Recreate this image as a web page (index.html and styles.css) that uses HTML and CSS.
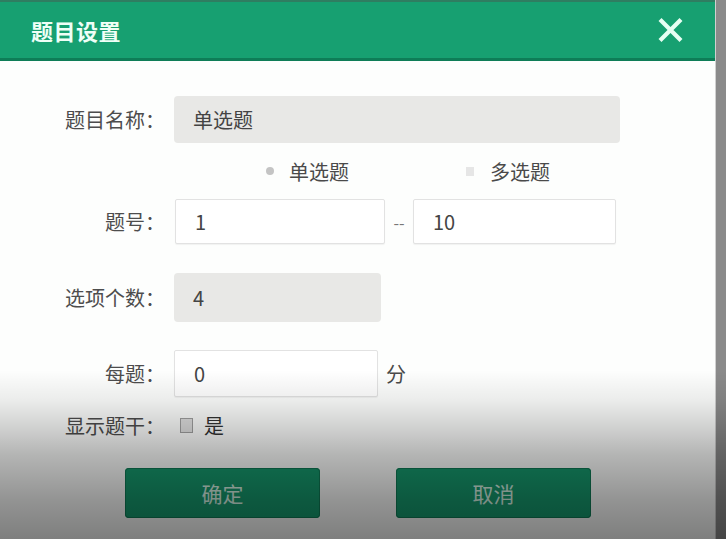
FILE: index.html
```html
<!DOCTYPE html>
<html lang="zh-CN">
<head>
<meta charset="utf-8">
<title>题目设置</title>
<link rel="stylesheet" href="styles.css">
</head>
<body>
<div class="dialog">
  <div class="header">
    <span class="title">题目设置</span>
    <svg class="close" width="25" height="24" viewBox="0 0 25 24"><path d="M3.5 3 L21.5 21 M21.5 3 L3.5 21" stroke="#e6fff3" stroke-width="4.2" stroke-linecap="square" fill="none"/></svg>
  </div>
  <div class="form">
    <div class="row row-name">
      <label class="label">题目名称：</label>
      <div class="input gray wide">单选题</div>
    </div>
    <div class="row row-radio">
      <span class="opt"><span class="dot"></span>单选题</span>
      <span class="opt"><span class="sq"></span>多选题</span>
    </div>
    <div class="row row-num">
      <label class="label">题号：</label>
      <div class="input white w210">1</div>
      <span class="dash">--</span>
      <div class="input white w203">10</div>
    </div>
    <div class="row row-count">
      <label class="label">选项个数：</label>
      <div class="input gray w207">4</div>
    </div>
    <div class="row row-score">
      <label class="label">每题：</label>
      <div class="input white w204">0</div>
      <span class="unit">分</span>
    </div>
    <div class="row row-show">
      <label class="label">显示题干：</label>
      <span class="check"></span>
      <span class="yes">是</span>
    </div>
    <div class="buttons">
      <button class="btn">确定</button>
      <button class="btn">取消</button>
    </div>
  </div>
</div>
<div class="shade"></div>
</body>
</html>
```
FILE: styles.css
```css
html, body {
  margin: 0;
  padding: 0;
  width: 726px;
  height: 539px;
  overflow: hidden;
}
body {
  background: linear-gradient(to right, #c4c4c4 0, #b0b0b0 5px, #8a8a8a 11px);
  font-family: "Noto Sans CJK SC", "Noto Sans", sans-serif;
  color: #4a4a4a;
  position: relative;
}
.dialog {
  width: 715px;
  height: 539px;
  background: #fdfefd;
  box-shadow: 1px 0 0 #d0d0d0;
}
.header {
  height: 56px;
  background: #17a071;
  border-top: 2px solid #2f7d61;
  border-bottom: 3px solid #0e7d57;
  display: flex;
  align-items: center;
  justify-content: space-between;
  padding: 0 32px 0 31px;
}
.title {
  color: #effff7;
  font-size: 22px;
  font-weight: 700;
  letter-spacing: 0.5px;
}
.close {
  display: block;
}
.form {
  padding-top: 35px;
  font-size: 20px;
}
.row {
  display: flex;
  align-items: center;
}
.label {
  width: 165px;
  text-align: right;
  margin-right: 9px;
  color: #4d4d4d;
  white-space: nowrap;
}
.input {
  box-sizing: border-box;
  padding-left: 19px;
  display: flex;
  align-items: center;
  color: #444;
}
.gray {
  background: #e8e8e6;
  border-radius: 4px;
}
.white {
  background: #fff;
  border: 1px solid #e2e2e2;
  border-radius: 2px;
  box-shadow: 0 1px 1px rgba(0,0,0,0.05);
}
.wide { width: 446px; }
.w210 { width: 210px; }
.w203 { width: 203px; }
.w207 { width: 207px; }
.w204 { width: 204px; }

.row-name { height: 47px; }
.row-name .input { height: 47px; }

.row-radio {
  margin-top: 16px;
  height: 24px;
  padding-left: 266px;
}
.opt {
  display: flex;
  align-items: center;
  width: 200px;
  color: #4a4a4a;
}
.dot {
  width: 8px;
  height: 8px;
  border-radius: 50%;
  background: #c4c4c4;
  margin-right: 15px;
}
.sq {
  width: 8px;
  height: 9px;
  background: #e6e6e6;
  margin-right: 16px;
}
.row-num { margin-top: 16px; height: 45px; }
.row-num .label { margin-right: 10px; }
.row-num .input { height: 45px; }
.dash {
  width: 28px;
  text-align: center;
  color: #777;
  font-size: 16px;
}
.row-count { margin-top: 29px; height: 49px; }
.row-count .input { height: 49px; }
.row-score { margin-top: 28px; height: 47px; }
.row-score .input { height: 47px; }
.unit { margin-left: 8px; }
.row-show { margin-top: 16px; height: 24px; }
.check {
  width: 11px;
  height: 13px;
  border: 1px solid #a0a0a0;
  background: #e0e0e0;
  margin-left: 6px;
  margin-right: 11px;
}
.yes { color: #333; }
.buttons {
  margin-top: 31px;
  display: flex;
  gap: 76px;
  padding-left: 125px;
}
.btn {
  width: 195px;
  height: 50px;
  background: #16996d;
  border: none;
  border-radius: 4px;
  color: #d7f2e5;
  font-family: "Noto Sans CJK SC", sans-serif;
  font-size: 21px;
  box-shadow: 0 0 0 1px #0f7a55 inset;
}
.shade {
  position: absolute;
  inset: 0;
  pointer-events: none;
  background: linear-gradient(to bottom,
    rgba(0,0,0,0) 0,
    rgba(0,0,0,0) 370px,
    rgba(0,0,0,0.07) 400px,
    rgba(0,0,0,0.17) 425px,
    rgba(0,0,0,0.29) 455px,
    rgba(0,0,0,0.42) 500px,
    rgba(0,0,0,0.50) 539px);
}
```
